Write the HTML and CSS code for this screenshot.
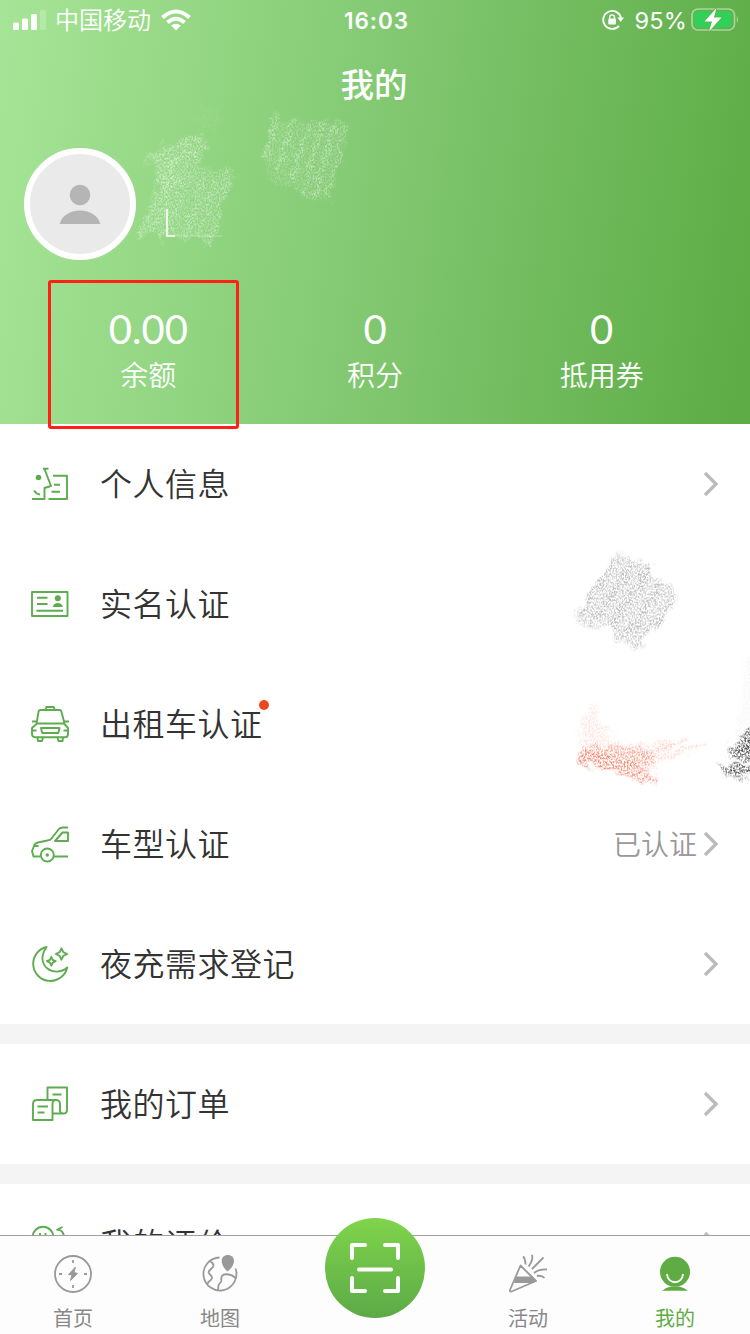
FILE: index.html
```html
<!DOCTYPE html>
<html lang="zh-CN">
<head>
<meta charset="utf-8">
<title>我的</title>
<link rel="stylesheet" href="styles.css">
</head>
<body>
<div class="screen">
  <header class="hero">
    <div class="status">
      <div class="status-left">
        <svg width="34" height="20" viewBox="0 0 34 20"><g fill="#fff"><rect x="0" y="12.500" width="6" height="7.500" rx="1.500"/><rect x="9" y="8.500" width="6" height="11.500" rx="1.500"/><rect x="18" y="4" width="6" height="16" rx="1.500"/><rect x="27" y="0" width="6" height="20" rx="1.500" opacity=".22"/></g></svg>
        <span class="carrier">中国移动</span>
        <svg class="wifi" width="30" height="22" viewBox="0 0 30 22"><g fill="none" stroke="#fff" stroke-width="4"><path d="M1.500 8.500Q15-3.500 28.500 8.500"/><path d="M6.500 13.500Q15 6 23.500 13.500"/></g><path d="M10 16.600Q15 12.700 20 16.600L15 21.600Z" fill="#fff"/></svg>
      </div>
      <div class="clock">16:03</div>
      <div class="status-right">
        <svg width="22" height="22" viewBox="0 0 22 22"><path d="M17 16.800A9 9 0 1 1 19 9" fill="none" stroke="#fff" stroke-width="1.800"/><path d="M15.400 8.500H22L18.700 13Z" fill="#fff"/><rect x="6.300" y="9.500" width="7.600" height="6" rx="1" fill="#fff"/><path d="M7.700 10V8.300a2.400 2.400 0 0 1 4.800 0V10" fill="none" stroke="#fff" stroke-width="1.400"/></svg>
        <span class="percent">95%</span>
        <svg width="49" height="26" viewBox="0 0 49 26"><rect x="1" y="2" width="42.500" height="21" rx="6" fill="none" stroke="#fff" stroke-opacity=".45" stroke-width="1.700"/><rect x="3.500" y="4.500" width="37" height="16" rx="3.500" fill="#30d158"/><path d="M45.800 9q2.200 3.500 0 7z" fill="#fff" opacity=".5"/><path d="M25.500 1 13.500 14.500H21L18 24.500 30.500 10.500H23Z" fill="#fff" stroke="#62b14e" stroke-width="1.500" paint-order="stroke"/></svg>
      </div>
    </div>
    <h1 class="title">我的</h1>
    <div class="avatar">
      <svg width="42" height="42" viewBox="0 0 42 42"><circle cx="21" cy="12" r="10.300" fill="#b5b5b5"/><path d="M.7 41C5 23 37 23 41.300 41Z" fill="#b5b5b5"/></svg>
    </div>
    <div class="stats">
      <div class="stat"><b>0.00</b><span>余额</span></div>
      <div class="stat"><b>0</b><span>积分</span></div>
      <div class="stat"><b>0</b><span>抵用券</span></div>
    </div>
  </header>

  <main class="menu">
    <section class="group">
      <div class="row">
        <svg class="icon" viewBox="0 0 40 40"><circle cx="8.500" cy="13.500" r="2.800" fill="#5eac50" stroke="none"/><path d="M13 4.800H18.500M14.500 5 21 22 14.500 24V35H2M4 26.500q2.500 3.700 6 4M23 11.800H37V35H18.500M24 20.800h6M21.500 27.800H30"/></svg>
        <span class="label">个人信息</span>
        <svg class="arrow" viewBox="0 0 16 28"><path d="M2 3 13 14 2 25"/></svg>
      </div>
      <div class="row">
        <svg class="icon" viewBox="0 0 40 40"><path d="M2 8H37.500V32H2ZM7 13.800H17.500M7 20H17.500M6.500 26.800H33"/><circle cx="27.800" cy="14.300" r="3" fill="#5eac50" stroke="none"/><path d="M22.800 23c.7-5.500 9.300-5.500 10 0Z" fill="#5eac50" stroke="none"/></svg>
        <span class="label">实名认证</span>
      </div>
      <div class="row">
        <svg class="icon" viewBox="0 0 40 40"><path d="M6.500 19.500 8.500 8q.3-2 2-2h19q1.700 0 2 2l3 11.500M15.500 6l.8-3h7.500l.9 3M2 17.500h4M34 17.500h5M7 19.500H34L38 24V30q0 3.300-3 3.300H5q-3 0-3-3.300V24ZM11 24H29.500l-1.200 5H12.200ZM2 26.500h4.500M33.500 26.500H38M7.500 33.500l.5 3.500h4l1-3.500M27.500 33.500l1 3.500h4l.5-3.500"/></svg>
        <span class="label">出租车认证<i class="dot"></i></span>
      </div>
      <div class="row">
        <svg class="icon" viewBox="0 0 40 40"><path d="M38 3.500H33Q30 3.500 28.500 5.500L21.500 14.500Q20.500 16 18.500 16.300L8 18.500Q4.500 19.500 4 22L2 27 3.500 32.500H10M24 32.500H38M25 17 32.500 8.500H38V17ZM3.500 22h5"/><circle cx="17.300" cy="31" r="6.500" fill="#fff"/><circle cx="17.300" cy="31" r="1.700" fill="#5eac50" stroke="none"/></svg>
        <span class="label">车型认证</span>
        <span class="value">已认证</span>
        <svg class="arrow" viewBox="0 0 16 28"><path d="M2 3 13 14 2 25"/></svg>
      </div>
      <div class="row">
        <svg class="icon" viewBox="0 0 40 40"><path d="M16.500 3A17.200 17.200 0 1 0 37.200 23.500C25 34.500 3.500 22 16.500 3ZM31.500 4.300l1.800 3.900 3.900 1.800-3.900 1.800-1.800 3.900-1.800-3.900-3.900-1.800 3.900-1.800ZM21.300 12.800l1.400 3 3 1.400-3 1.400-1.400 3-1.400-3-3-1.400 3-1.400Z"/></svg>
        <span class="label">夜充需求登记</span>
        <svg class="arrow" viewBox="0 0 16 28"><path d="M2 3 13 14 2 25"/></svg>
      </div>
    </section>
    <section class="group">
      <div class="row">
        <svg class="icon" viewBox="0 0 40 40"><path d="M17.500 15V3.500H37V26q0 3.500-3.500 3.500T30 26V20q0-4-4-4H7Q3 16 3 20V36H22.500V20q0-4 3.500-4M22.500 29.500H34M22.500 10.500H31.500M7.500 22.500H18M7.500 28.500H14.500"/></svg>
        <span class="label">我的订单</span>
        <svg class="arrow" viewBox="0 0 16 28"><path d="M2 3 13 14 2 25"/></svg>
      </div>
    </section>
    <section class="group">
      <div class="row">
        <svg class="icon" viewBox="0 0 40 40"><circle cx="13" cy="13" r="10.300"/><path d="M10 9v2M15.500 9v2M8 14q5 5 10 0M26.500 5.800h3q4 1.500 4.500 7M26.500 6l6-3"/></svg>
        <span class="label">我的评价</span>
        <svg class="arrow" viewBox="0 0 16 28"><path d="M2 3 13 14 2 25"/></svg>
      </div>
    </section>
  </main>

  <nav class="tabs">
    <div class="tab">
      <svg viewBox="0 0 40 40"><circle cx="20" cy="20" r="18"/><path d="M20 6v3M20 31v3M6 20h3M31 20h3"/><path d="M22.500 13 15.500 20.500 19 21 17.500 26.500 24.500 19.500 21 18.500Z" fill="#999" stroke-width="1"/></svg>
      <span>首页</span>
    </div>
    <div class="tab">
      <svg viewBox="0 0 40 40"><path d="M19.500 3.500A16.500 16.500 0 1 0 35.500 14.500M10 7C16 11 13 13 10 16 6 20 12 20 12 24 11 28 7 27 8 30M36 25C33 20 24 19 22 22 20 25 23 27 20 29 17 31 19 34 18 36"/><path d="M27.500 17.500C19 10 20.500 1 27.800 1S37 10 27.500 17.500Z" fill="#999" stroke="none"/></svg>
      <span>地图</span>
    </div>
    <div class="tab tab-scan">
      <div class="scan"><svg width="50" height="50" viewBox="0 0 50 50"><path d="M2 15V2H15M35 2H48V15M2 35V48H15M35 48H48V35M9 26.500H41"/></svg></div>
    </div>
    <div class="tab">
      <svg viewBox="0 0 40 40"><path d="M12.500 11.500 28 27 3.500 37.500Q1.500 38 2 36ZM17.500 10.500Q17.500 5 15 2.500M20.500 12.500Q25.500 6 24 .8M24 15 35.500 3.500M26 19Q31 15 39 15.500M29 22Q34 21 36.500 24"/><path d="M8 22.500H24L28.500 27.500 23 29H6Z" fill="#999" stroke="none"/></svg>
      <span>活动</span>
    </div>
    <div class="tab active">
      <svg viewBox="0 0 40 40"><path d="M7 36.800Q11 33.500 16 32.500H24Q29 33.500 33 36.800Z" fill="#5eac43" stroke="none"/><circle cx="20" cy="17.800" r="15" fill="#5eac43" stroke="none"/><path d="M12 20C12.500 31 27.500 31 28 20" stroke="#fff"/></svg>
      <span>我的</span>
    </div>
  </nav>

  <div class="highlight"></div>

  <svg class="chalk" width="750" height="1334" viewBox="0 0 750 1334">
    <defs>
      <filter id="grain" x="-20%" y="-20%" width="140%" height="140%">
        <feTurbulence type="fractalNoise" baseFrequency=".62 .5" numOctaves="3" seed="8" result="n"/>
        <feColorMatrix in="n" type="matrix" values="0 0 0 0 0  0 0 0 0 0  0 0 0 0 0  3.600 0 0 0 -1.350" result="m"/>
        <feGaussianBlur in="SourceGraphic" stdDeviation="1.800" result="b"/>
        <feTurbulence type="fractalNoise" baseFrequency=".09" numOctaves="2" seed="3" result="w"/>
        <feDisplacementMap in="b" in2="w" scale="16" xChannelSelector="R" yChannelSelector="G" result="d"/>
        <feComposite in="d" in2="m" operator="in"/>
      </filter>
    </defs>
    <g filter="url(#grain)" fill="#fff">
      <path d="M140 164Q163 141 202 134L209 150 196 165 235 172 222 205 210 249 200 240 178 238 160 242 153 232 136 238 157 183 155 160Z" opacity=".27"/>
      <path d="M142 163 200 136 M155 163 207 149 M160 170 196 152" fill="none" stroke="#fff" stroke-width="5" opacity=".3"/>
      <path d="M178 158 138 238M187 163 151 234M177 176 165 215M193 172 162 241M205 175 185 238M216 182 196 242M228 174 208 251" fill="none" stroke="#fff" stroke-width="5" opacity=".25"/>
      <path d="M157 180 176 162 176 190 162 200Z" opacity=".3"/>
      <path d="M200 108 215 104 225 118 215 132 196 130Z" opacity=".08"/>
      <path d="M264 150 270 125 294 120 325 121 348 124 327 200 302 198 290 185 268 178Z" opacity=".2"/>
      <path d="M277 112 265 158M294 119 277 173M308 122 291 187M322 121 302 198M334 126 314 198M347 124 327 200" fill="none" stroke="#fff" stroke-width="5" opacity=".35"/>
    </g>
    <path d="M167 209V236H222" fill="none" stroke="#fff" stroke-width="1" opacity=".35"/>
    <path d="M167 209V236H175" fill="none" stroke="#fff" stroke-width="1.500"/>
    <g filter="url(#grain)">
      <path d="M617 554 653 564 651 576 668 585 676 597 655 627 634 650 629 641 617 639 612 626 575 622 576 612Z" fill="#888" opacity=".38"/>
      <path d="M619 553 575 620M636 560 594 622M651 566 611 625M660 585 623 641M676 596 635 652" fill="none" stroke="#777" stroke-width="5" opacity=".28"/>
      <path d="M596 699 600 725 620 744 670 740 683 743 652 760 620 758 579 758 579 730Z" fill="#f27355" opacity=".16"/>
      <path d="M580 747 610 746 650 750 656 763 650 775 659 782 577 762Z" fill="#f05b38" opacity=".4"/>
      <path d="M578 760 658 782M582 752 635 766" fill="none" stroke="#f05030" stroke-width="5" opacity=".5"/>
      <path d="M645 762 703 747M640 756 685 738" fill="none" stroke="#f27355" stroke-width="5" opacity=".25"/>
      <path d="M758 722 743 732 738 743 725 753 739 760 758 757Z" fill="#222" opacity=".6"/>
      <path d="M758 735 742 746 730 752H758Z" fill="#222" opacity=".5"/>
      <path d="M719 765 735 764 758 765V776H727Z" fill="#222" opacity=".7"/>
      <path d="M746 660H758V730H738Z" fill="#999" opacity=".07"/>
    </g>
  </svg>
</div>
</body>
</html>
```

FILE: styles.css
```css
* { box-sizing: border-box; }
body {
  margin: 0;
  font-family: "Noto Sans CJK SC", sans-serif;
}
.screen {
  position: relative;
  display: flex;
  flex-direction: column;
  width: 750px;
  height: 1334px;
  overflow: hidden;
  background: #fff;
}
.hero {
  flex: none;
  height: 424px;
  color: #fff;
  background: linear-gradient(98deg, #a6e597 0%, #82c871 50%, #5dac46 98%);
}
.status {
  display: grid;
  grid-template-columns: 1fr auto 1fr;
  align-items: center;
  height: 40px;
  padding: 0 10px 0 13px;
}
.status-left, .status-right {
  display: flex;
  align-items: center;
}
.carrier {
  margin: -1px 0 1px 8px;
  font-size: 24px;
  font-weight: 350;
  line-height: 40px;
}
.wifi { margin-left: 10px; }
.clock {
  padding-top: 2px;
  font: 600 22.5px/38px Inter, sans-serif;
  letter-spacing: 1px;
}
.status-right { justify-content: flex-end; }
.percent {
  margin: 0 4px 0 10px;
  padding-top: 2px;
  font: 400 23.5px/38px Inter, sans-serif;
  letter-spacing: .2px;
}
.title {
  margin: 18px 0 0;
  padding-right: 2px;
  font-size: 33.5px;
  font-weight: 500;
  line-height: 50px;
  text-align: center;
}
.avatar {
  display: flex;
  align-items: center;
  justify-content: center;
  width: 112px;
  height: 112px;
  margin: 40px 0 0 24px;
  border: 6px solid #fff;
  border-radius: 50%;
  background: #eaeaea;
}
.stats {
  display: grid;
  grid-template-columns: repeat(3, 1fr);
  margin-top: 45px;
  padding: 0 35px;
}
.stat {
  display: flex;
  flex-direction: column;
  align-items: center;
}
.stat b {
  font: 400 40px/49px Lato, sans-serif;
}
.stat span {
  font-size: 28px;
  font-weight: 350;
  line-height: 41px;
}
.menu {
  display: flex;
  flex: 1;
  flex-direction: column;
  gap: 20px;
  min-height: 0;
  overflow: hidden;
  background: #f4f4f4;
}
.group { background: #fff; }
.row {
  display: flex;
  align-items: center;
  height: 120px;
  padding: 0 31px 0 30px;
}
.icon {
  width: 40px;
  height: 40px;
  margin-right: 30px;
  fill: none;
  stroke: #5eac50;
  stroke-width: 1.9;
  stroke-linejoin: round;
}
.label {
  position: relative;
  margin-right: auto;
  padding-bottom: 4px;
  color: #333;
  font-size: 32px;
  font-weight: 350;
  line-height: 46px;
  letter-spacing: .5px;
}
.dot {
  position: absolute;
  top: 1px;
  right: -6px;
  width: 10px;
  height: 10px;
  border-radius: 50%;
  background: #e8481c;
}
.value {
  margin-right: 6px;
  padding-bottom: 2px;
  color: #999;
  font-size: 28px;
  font-weight: 350;
  line-height: 42px;
}
.arrow {
  width: 16px;
  height: 28px;
  fill: none;
  stroke: #bbb;
  stroke-width: 3.4;
}
.tabs {
  display: grid;
  flex: none;
  grid-template-columns: 146px 148px 162px 144px 150px;
  height: 99px;
  border-top: 1px solid #a0a0a0;
  background: #fdfdfd;
}
.tab {
  display: flex;
  flex-direction: column;
  align-items: center;
  padding-top: 18px;
  color: #888;
  font-size: 20px;
  line-height: 30px;
}
.tab > svg {
  width: 40px;
  height: 40px;
  margin-bottom: 9px;
  fill: none;
  stroke: #999;
  stroke-width: 1.8;
  stroke-linejoin: round;
}
.active { color: #5eac43; }
.tab-scan { padding: 0; }
.scan {
  display: flex;
  align-items: center;
  justify-content: center;
  width: 100px;
  height: 100px;
  margin-top: -18px;
  border-radius: 50%;
  background: linear-gradient(#80d44b, #5caa48);
}
.scan svg {
  fill: none;
  stroke: #fff;
  stroke-width: 4;
  stroke-linecap: round;
  stroke-linejoin: round;
}
.highlight {
  position: absolute;
  top: 280px;
  left: 48px;
  width: 191px;
  height: 149px;
  border: 3px solid #ff2116;
  border-radius: 3px;
}
.chalk {
  position: absolute;
  top: 0;
  left: 0;
  pointer-events: none;
}
```
